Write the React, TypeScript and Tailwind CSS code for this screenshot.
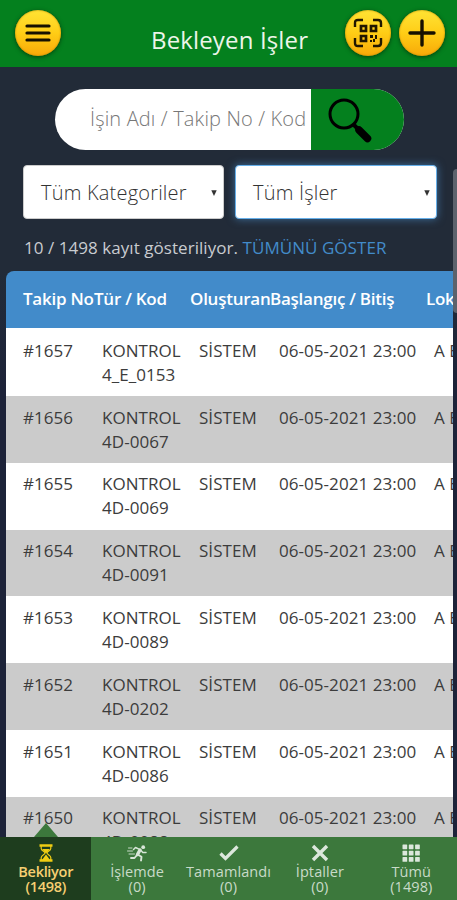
import type { ReactNode } from "react";
import clsx from "clsx";

const JOBS = [
  { no: "#1657", code: "4_E_0153" },
  { no: "#1656", code: "4D-0067" },
  { no: "#1655", code: "4D-0069" },
  { no: "#1654", code: "4D-0091" },
  { no: "#1653", code: "4D-0089" },
  { no: "#1652", code: "4D-0202" },
  { no: "#1651", code: "4D-0086" },
  { no: "#1650", code: "4D-0088" },
];

const HourglassIcon = () => (
  <svg viewBox="0 0 14 18" className="h-[18px] w-3.5" fill="none" stroke="#f0cd13" strokeWidth="1.2">
    <path d="M.5 1.500h13M.5 16.500h13" strokeWidth="2.400" />
    <path d="M2.200 2v2.500C2.200 7 6 7.500 6 9s-3.800 2-3.800 4.500V16M11.800 2v2.500C11.800 7 8 7.500 8 9s3.800 2 3.800 4.500V16" />
    <path d="M3 5h8L7 9.500ZM7 10.500l4 5.500H3Z" fill="#f0cd13" stroke="none" />
  </svg>
);

const RunnerIcon = () => (
  <svg viewBox="0 0 22 18" className="h-[18px] w-[22px]" fill="none" stroke="#d9e6d9" strokeLinecap="round" strokeLinejoin="round">
    <circle cx="17.200" cy="3.200" r="1.900" fill="#d9e6d9" stroke="none" />
    <path d="M14 6 11.500 10.500" strokeWidth="3.400" />
    <path d="m13 5.200-3.500-1.700L7.500 5.500M15 6.500l1.800 2H20" strokeWidth="1.500" />
    <path d="m12 10.800 3.500 2-.5 3.700M11 11l-2.500 3H5" strokeWidth="1.900" />
    <path d="M2.500 4h3.500M1.500 7h5M3 10h5.500" strokeWidth=".9" />
  </svg>
);

const CheckIcon = () => (
  <svg viewBox="0 0 22 18" className="h-[18px] w-[22px]" fill="none" stroke="#dce7dc" strokeWidth="3.200">
    <path d="m2.500 9.500 5 5L19.500 2.500" />
  </svg>
);

const CrossIcon = () => (
  <svg viewBox="0 0 18 18" className="size-[18px]" stroke="#dce7dc" strokeWidth="3.400">
    <path d="m2 2 14 14M16 2 2 16" />
  </svg>
);

const GridIcon = () => (
  <svg viewBox="0 0 18 18" className="size-[18px]" fill="#dce7dc">
    {[0.5, 6.8, 13.1].map((y) =>
      [0.5, 6.8, 13.1].map((x) => <rect key={`${x}-${y}`} x={x} y={y} width="4.700" height="4.700" rx=".6" />)
    )}
  </svg>
);

const TABS = [
  { label: "Bekliyor", count: "(1498)", icon: <HourglassIcon />, active: true },
  { label: "İşlemde", count: "(0)", icon: <RunnerIcon /> },
  { label: "Tamamlandı", count: "(0)", icon: <CheckIcon /> },
  { label: "İptaller", count: "(0)", icon: <CrossIcon /> },
  { label: "Tümü", count: "(1498)", icon: <GridIcon /> },
];

const RoundButton = ({ label, children }: { label: string; children: ReactNode }) => (
  <button
    aria-label={label}
    className="flex size-[46px] items-center justify-center rounded-full bg-linear-to-b from-[#ffe433] via-[#ffcd15] to-[#f7a908] shadow-[0_1px_4px_rgba(0,30,0,0.65),inset_0_0_2px_#b97b00]"
  >
    {children}
  </button>
);

const Header = () => (
  <header className="flex h-[67px] shrink-0 bg-[#04801e] pt-[10px] pr-[12px] pl-[15px]">
    <RoundButton label="Menü">
      <svg viewBox="0 0 26 20" className="h-5 w-[26px]" stroke="#161000" strokeWidth="3.200" strokeLinecap="round">
        <path d="M2 3h22M2 10h22M2 17h22" />
      </svg>
    </RoundButton>
    <h1 className="flex-1 pt-[13px] pl-[90px] text-[24px] leading-[34px] tracking-[0.15px] whitespace-nowrap text-[#ecf5e9]">
      Bekleyen İşler
    </h1>
    <div className="flex w-[101px] shrink-0 justify-end gap-2">
      <RoundButton label="QR">
        <svg viewBox="0 0 30 30" className="size-[30px]" fill="none" stroke="#211700" strokeWidth="2.400">
          <path d="M2 9V5q0-3 3-3h5M20 2h5q3 0 3 3v4M28 20v5q0 3-3 3h-5M10 28H5q-3 0-3-3v-5" />
          <path d="M8 8h5v5H8ZM18 8h5v5h-5ZM8 18h5v5H8Z" strokeWidth="2.700" />
          <path d="M17 17h3v3h-3zM22 17h2v4h-2zM17 22h2v2h-2zM20 21h2v3h-2z" fill="#211700" stroke="none" />
        </svg>
      </RoundButton>
      <RoundButton label="Ekle">
        <svg viewBox="0 0 28 28" className="size-7" stroke="#161000" strokeWidth="3.400" strokeLinecap="round">
          <path d="M14 2v24M2 14h24" />
        </svg>
      </RoundButton>
    </div>
  </header>
);

const SearchBar = () => (
  <div className="mt-[22px] ml-[55px] flex h-[61px] w-[349px] overflow-hidden rounded-full bg-white">
    <span className="flex-1 pl-[35px] text-[20px] leading-[60px] font-light tracking-[0.15px] whitespace-nowrap text-[#777]">
      İşin Adı / Takip No / Kod
    </span>
    <button aria-label="Ara" className="w-[93px] shrink-0 bg-[#04801e] pl-[16px]">
      <svg viewBox="0 0 46 46" className="size-[46px]" fill="none" stroke="#000">
        <circle cx="17" cy="17" r="14" strokeWidth="3" />
        <path d="m26.500 27.500 5 5" strokeWidth="4" />
        <path d="m32 33 8.500 8.500" strokeWidth="7.500" strokeLinecap="round" />
      </svg>
    </button>
  </div>
);

const Select = ({ text, focused }: { text: string; focused?: boolean }) => (
  <div
    className={clsx(
      "flex h-[54px] items-center justify-between rounded-[4px] border bg-white pt-0.5 pr-1.5 pl-[17px] text-[20px] font-light tracking-[0.2px] text-[#333]",
      focused ? "w-[202px] border-[#66afe9] shadow-[0_0_8px_rgba(72,140,200,0.7)]" : "w-[201px] border-[#ccc]"
    )}
  >
    <span>{text}</span>
    <svg viewBox="0 0 6 6" className="size-[6px]" fill="#333">
      <path d="M.3.300h5.400L3 6Z" />
    </svg>
  </div>
);

const JobTable = () => (
  <div className="ml-1.5 w-[447px] overflow-hidden rounded-tl-[8px] whitespace-nowrap">
    <div className="flex h-[57px] bg-[#428bca] pl-[17px] text-[17px] leading-[56px] font-semibold tracking-[-0.25px] text-white">
      <span className="w-[71px] shrink-0">Takip No</span>
      <span className="w-[96px] shrink-0">Tür / Kod</span>
      <span className="w-[80px] shrink-0">Oluşturan</span>
      <span className="w-[156px] shrink-0">Başlangıç / Bitiş</span>
      <span className="shrink-0">Lokasyon</span>
    </div>
    {JOBS.map((job, i) => (
      <div
        key={job.no}
        className={clsx(
          "flex pl-[17px] text-[17px] leading-6 tracking-[0.05px] text-[#3c3c3c]",
          i === 0 ? "h-[68px] pt-[11px]" : "h-[66.8px] pt-[9.6px]",
          i % 2 ? "bg-[#cbcbcb]" : "bg-white"
        )}
      >
        <span className="w-[79px] shrink-0">{job.no}</span>
        <span className="w-[97px] shrink-0">
          KONTROL
          <br />
          {job.code}
        </span>
        <span className="w-[80px] shrink-0">SİSTEM</span>
        <span className="w-[155px] shrink-0">06-05-2021 23:00</span>
        <span className="shrink-0">A BLOK</span>
      </div>
    ))}
  </div>
);

const TabBar = () => (
  <nav className="absolute inset-x-0 bottom-0 flex h-[63px] bg-[#3c783c]">
    {TABS.map((tab) => (
      <div
        key={tab.label}
        className={clsx(
          "relative flex flex-1 flex-col items-center pt-[7px] text-[14.5px] leading-[15px]",
          tab.active ? "bg-[#1e3d1e] font-semibold tracking-[-0.3px] text-[#f6cf72]" : "tracking-[0.1px] text-[#c9dbc9]"
        )}
      >
        {tab.active && (
          <svg viewBox="0 0 24 14" className="absolute -top-3.5 left-[34px] h-3.5 w-6" fill="#3c783c">
            <path d="M12 0 24 14H0Z" />
          </svg>
        )}
        {tab.icon}
        <span className="mt-[2px]">{tab.label}</span>
        <span>{tab.count}</span>
      </div>
    ))}
  </nav>
);

const App = () => {
  return (
    <main className="relative flex h-[900px] w-[457px] flex-col overflow-hidden bg-[#222b38] font-['Open_Sans',sans-serif]">
      <Header />
      <SearchBar />
      <div className="mt-[15px] flex gap-[11px] pl-[23px]">
        <Select text="Tüm Kategoriler" />
        <Select text="Tüm İşler" focused />
      </div>
      <p className="mt-[17px] mb-[11px] pl-6 text-[17px] leading-6 tracking-[0.05px] whitespace-nowrap text-[#c9ccd0]">
        10 / 1498 kayıt gösteriliyor. <a className="text-[#428bca]">TÜMÜNÜ GÖSTER</a>
      </p>
      <div className="bg-linear-to-b from-[#222b38] to-[#1d2339] to-20%">
        <JobTable />
      </div>
      <div className="absolute top-[169px] right-0 h-[144px] w-1 rounded-l-full bg-[#5c626c]" />
      <TabBar />
    </main>
  );
};

export default App;
